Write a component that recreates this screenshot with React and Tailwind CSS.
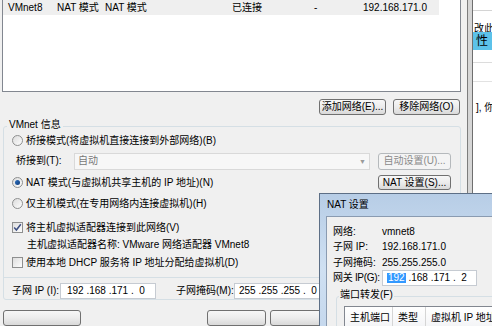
import React from "react";

const FONT = { fontFamily: '"Liberation Sans", "Noto Sans CJK SC", sans-serif' };

function Btn({ children, className = "", disabled = false }) {
  return (
    <div
      className={`flex items-center justify-center rounded-[3px] border text-[10px] leading-none whitespace-nowrap ${
        disabled
          ? "border-[#b5b9bc] bg-[#f4f4f4] text-[#8a8a8a]"
          : "border-[#707070] bg-linear-to-b from-[#f7f7f7] via-[#ececec] to-[#d9d9d9] text-black"
      } ${className}`}
    >
      {children}
    </div>
  );
}

function Radio({ checked }) {
  return (
    <span className="flex h-[11px] w-[11px] shrink-0 items-center justify-center rounded-full border border-[#8e8f8f] bg-linear-to-br from-[#dcdcdc] to-[#fdfdfd]">
      {checked && <span className="h-[5px] w-[5px] rounded-full bg-linear-to-br from-[#2b6fc0] to-[#123e7c]" />}
    </span>
  );
}

function Check({ checked }) {
  return (
    <span className="flex h-[11px] w-[11px] shrink-0 items-center justify-center border border-[#8e8f8f] bg-linear-to-br from-[#dedede] to-[#fdfdfd]">
      {checked && (
        <svg width="9" height="9" viewBox="0 0 9 9">
          <path d="M1.2 4.6 L3.4 7 L7.8 1.2" fill="none" stroke="#3d4f82" strokeWidth="1.5" />
        </svg>
      )}
    </span>
  );
}

function NatDialog() {
  return (
    <div className="absolute left-[319px] top-[193px] h-[150px] w-[200px] border border-[#5d6f86] bg-linear-to-b from-[#b7cde6] via-[#cfe0f2] to-[#c3d6ec] pl-[6px]">
      <div className="flex h-[22px] items-center pl-[1px] text-[10px] leading-none text-black">NAT 设置</div>
      <div className="h-[130px] border border-[#8a9bb1] bg-[#f0f0f0] pl-[6px] text-[10px] leading-none text-black whitespace-nowrap">
        <div className="mt-[9px] flex h-[12px] items-center">
          <span className="w-[49px] shrink-0">网络:</span>
          <span>vmnet8</span>
        </div>
        <div className="mt-[3px] flex h-[12px] items-center">
          <span className="w-[49px] shrink-0">子网 IP:</span>
          <span>192.168.171.0</span>
        </div>
        <div className="mt-[4px] flex h-[12px] items-center">
          <span className="w-[49px] shrink-0">子网掩码:</span>
          <span>255.255.255.0</span>
        </div>
        <div className="mt-[1px] flex h-[16px] items-center">
          <span className="w-[49px] shrink-0 tracking-[-0.3px]">网关 IP(G):</span>
          <div className="flex h-[16px] w-[95px] shrink-0 items-center border border-[#c6cbd2] bg-white pl-[4px] whitespace-pre">
            <span className="bg-[#3399ff] px-[1px] text-white">192</span>
            <span> .168 .171 .  2</span>
          </div>
        </div>
        <div className="relative ml-[3px] mt-[10px] h-[60px] rounded-[3px] border border-[#d5dfe5]">
          <span className="absolute left-[2px] top-[-7px] bg-[#f0f0f0] px-[1px]">端口转发(F)</span>
          <div className="ml-[7px] mt-[9px] h-[40px] border border-[#828790] bg-white">
            <div className="flex h-[22px] items-center border-b border-[#e5e5e5] bg-linear-to-b from-white to-[#f3f4f6]">
              <span className="flex h-full w-[48px] items-center border-r border-[#d5d5d5] pl-[5px]">主机端口</span>
              <span className="flex h-full w-[33px] items-center border-r border-[#d5d5d5] pl-[5px]">类型</span>
              <span className="flex h-full items-center pl-[5px]">虚拟机 IP 地址</span>
            </div>
          </div>
        </div>
      </div>
    </div>
  );
}

function RightWindow() {
  return (
    <div className="flex h-full flex-1 flex-col overflow-hidden bg-white text-black">
      <div className="h-[11px] border-b border-[#d4d4d4] bg-white" />
      <div className="relative h-[21px] overflow-hidden">
        <span className="absolute left-[1px] top-[13px] text-[10px] leading-none whitespace-nowrap">改此</span>
      </div>
      <div className="flex h-[18px] items-center bg-[#5cc2ea] pl-[3px] text-[12px] leading-none">性</div>
      <div className="h-[13px] border-b border-[#dcdcdc]" />
      <div className="h-[19px] border-b border-[#e2e2e2]" />
      <div className="mt-[21px] pl-[3px] text-[10px] leading-none whitespace-nowrap">], 你</div>
    </div>
  );
}

export default function App() {
  return (
    <div
      className="relative flex h-[326px] w-[492px] overflow-hidden bg-[#f0f0f0] text-[10px] leading-none text-black"
      style={FONT}
    >
      <div className="flex h-full w-[467px] shrink-0 flex-col">
        {/* list box */}
        <div className="ml-[2px] mt-[-1px] h-[97px] w-[459px] border border-[#828790] bg-white">
          <div className="flex h-[15px] w-[436px] items-center bg-[#efefef] pl-[5px] whitespace-nowrap">
            <span className="w-[49px]">VMnet8</span>
            <span className="w-[48px]">NAT 模式</span>
            <span className="w-[127px]">NAT 模式</span>
            <span className="w-[82px]">已连接</span>
            <span className="w-[49px]">-</span>
            <span>192.168.171.0</span>
          </div>
        </div>

        {/* buttons */}
        <div className="mt-[7px] flex justify-end gap-[7px] pr-[7px]">
          <Btn className="h-[16px] w-[67px]">添加网络(E)...</Btn>
          <Btn className="h-[16px] w-[67px]">移除网络(O)</Btn>
        </div>

        {/* group */}
        <div className="relative ml-[3px] mt-[11px] h-[182px] w-[458px] rounded-[3px] border border-[#d5dfe5] pl-[8px] pr-[9px]">
          <span className="absolute left-[3px] top-[-7px] bg-[#f0f0f0] px-[2px]">VMnet 信息</span>

          <div className="mt-[6px] flex h-[16px] items-center gap-[3px]">
            <Radio />
            <span>桥接模式(将虚拟机直接连接到外部网络)(B)</span>
          </div>

          <div className="mt-[4px] flex h-[17px] items-center">
            <span className="w-[62px] pl-[4px]">桥接到(T):</span>
            <div className="flex h-[17px] w-[296px] items-center justify-between border border-[#d9d9d9] bg-[#f7f7f7] pl-[3px] pr-[3px] text-[#777]">
              <span>自动</span>
              <span className="text-[7px] text-[#9a9a9a]">▼</span>
            </div>
            <Btn disabled className="ml-auto h-[17px] w-[73px]">自动设置(U)...</Btn>
          </div>

          <div className="mt-[5px] flex h-[16px] items-center gap-[3px]">
            <Radio checked />
            <span>NAT 模式(与虚拟机共享主机的 IP 地址)(N)</span>
            <Btn className="ml-auto h-[15px] w-[73px]">NAT 设置(S)...</Btn>
          </div>

          <div className="mt-[5px] flex h-[16px] items-center gap-[3px]">
            <Radio />
            <span>仅主机模式(在专用网络内连接虚拟机)(H)</span>
          </div>

          <div className="mt-[8px] flex h-[16px] items-center gap-[3px]">
            <Check checked />
            <span>将主机虚拟适配器连接到此网络(V)</span>
          </div>

          <div className="mt-[1px] flex h-[16px] items-center pl-[15px]">
            主机虚拟适配器名称: VMware 网络适配器 VMnet8
          </div>

          <div className="mt-[2px] flex h-[16px] items-center gap-[3px]">
            <Check />
            <span>使用本地 DHCP 服务将 IP 地址分配给虚拟机(D)</span>
          </div>

          <div className="ml-[-8px] mt-[6px] h-[1px] w-[457px] bg-[#d5dfe5]" />

          <div className="mt-[5px] flex h-[16px] items-center whitespace-nowrap">
            <span className="w-[48px]">子网 IP (I):</span>
            <div className="flex h-[16px] w-[96px] items-center border border-[#c6cbd2] bg-white pl-[6px] whitespace-pre">
              192 .168 .171 .  0
            </div>
            <span className="ml-[20px] w-[58px]">子网掩码(M):</span>
            <div className="flex h-[16px] w-[100px] items-center border border-[#c6cbd2] bg-white pl-[4px] whitespace-pre">
              255 .255 .255 .  0
            </div>
          </div>
        </div>

        {/* bottom buttons */}
        <div className="mt-[10px] flex">
          <Btn className="ml-[3px] h-[16px] w-[78px]"> </Btn>
          <Btn className="ml-[126px] h-[16px] w-[59px]"> </Btn>
          <Btn className="ml-[4px] h-[16px] w-[59px]"> </Btn>
        </div>
      </div>

      {/* window edge */}
      <div className="h-full w-[1px] shrink-0 bg-[#7d7d7d]" />
      <div className="h-full w-[4px] shrink-0 bg-[#d6d6d6]" />
      <div className="h-full w-[1px] shrink-0 bg-[#6f6f6f]" />

      <RightWindow />

      <NatDialog />
    </div>
  );
}
